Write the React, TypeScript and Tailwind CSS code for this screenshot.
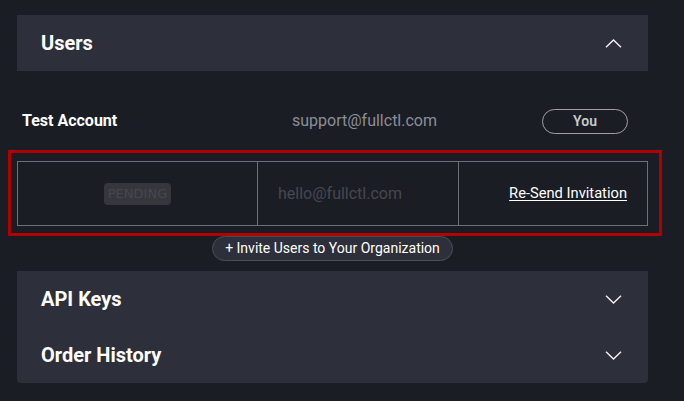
const font = { fontFamily: "Roboto, 'Noto Sans', sans-serif" };

function Chevron({ up }: { up?: boolean }) {
  return (
    <svg width="17" height="9" viewBox="0 0 17 9" fill="none" className="shrink-0">
      <polyline
        points={up ? "1,8.2 8.5,1 16,8.2" : "1,0.8 8.5,8 16,0.8"}
        stroke="#f2f2f2"
        strokeWidth="1.4"
      />
    </svg>
  );
}

function SectionRow({ title, up }: { title: string; up?: boolean }) {
  return (
    <div className="flex h-[56px] items-center justify-between pl-[24px] pr-[26px]">
      <h2 className="text-[20px] font-bold text-white">{title}</h2>
      <Chevron up={up} />
    </div>
  );
}

export default function App() {
  return (
    <div className="min-h-[401px] w-[684px] bg-[#1b1d24] pl-[17px] pt-[15px]" style={font}>
      <div className="w-[631px]">
        <div className="bg-[#2d2f3b]">
          <SectionRow title="Users" up />
        </div>

        <div className="mt-[25px] grid h-[50px] grid-cols-[270px_250px_86px] items-center pl-[5px]">
          <span className="text-[16px] font-bold text-white">Test Account</span>
          <span className="text-[16px] text-[#8b8e97]">support@fullctl.com</span>
          <span className="flex h-[25px] items-center justify-center rounded-full border border-[#a0a0a4] text-[14px] font-semibold text-[#c9c9cc]">
            You
          </span>
        </div>

        <div className="-ml-[9px] mt-[4px] w-[654px] border-[3px] border-[#b00000] pb-[7px] pl-[6px] pr-[11px] pt-[8px]">
          <div className="grid h-[65px] grid-cols-[240px_201px_1fr] border border-[#6d7079]">
            <div className="flex items-center justify-center border-r border-[#6d7079]">
              <span
                className="rounded-[4px] bg-[#35373d] px-[4px] py-[3px] text-[13px] leading-[16px] text-[#46484f]"
                style={{ fontFamily: "'DejaVu Sans', sans-serif" }}
              >
                PENDING
              </span>
            </div>
            <div className="flex items-center border-r border-[#6d7079] pl-[20px]">
              <span className="text-[16px] text-[#46484f]">hello@fullctl.com</span>
            </div>
            <div className="flex items-center justify-end pr-[20px]">
              <a className="text-[14.7px] text-white underline underline-offset-2">Re-Send Invitation</a>
            </div>
          </div>
        </div>

        <div className="flex justify-center">
          <button className="h-[25px] rounded-full border border-[#4b4e58] bg-[#2d2f3b] px-[12px] text-[14px] text-white" style={font}>
            + Invite Users to Your Organization
          </button>
        </div>

        <div className="mt-[10px] rounded-b-[4px] bg-[#2d2f3b]">
          <SectionRow title="API Keys" />
          <SectionRow title="Order History" />
        </div>
      </div>
    </div>
  );
}
